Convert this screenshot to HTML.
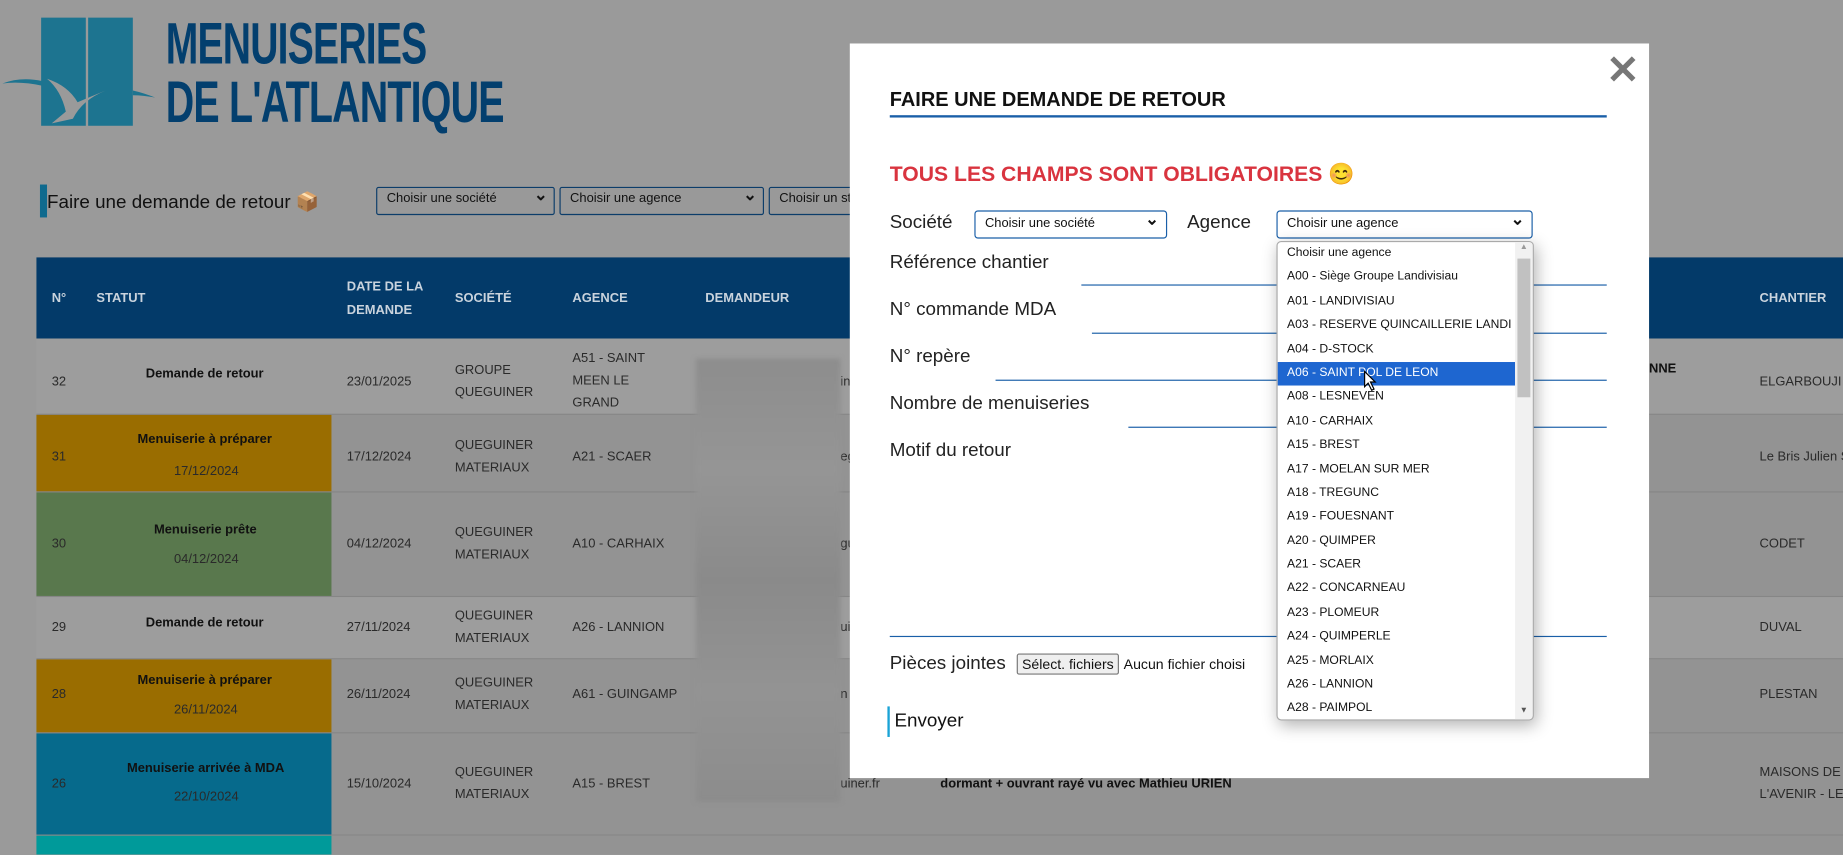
<!DOCTYPE html>
<html><head><meta charset="utf-8"><style>
*{margin:0;padding:0;box-sizing:border-box}
html,body{width:1843px;height:854px;overflow:hidden;background:#9a9a9a}
#s{position:absolute;left:0;top:0;width:1568px;height:727px;transform:scale(1.17538);transform-origin:0 0;font-family:"Liberation Sans",Arial,sans-serif;background:#9a9a9a;overflow:hidden}
.a{position:absolute;white-space:nowrap}
.sel{position:absolute;border:1px solid #0c3d6a;border-radius:2px;font-size:11px;padding:3px 8px;color:#111;background:#999}
.sel:after{content:"⌄";position:absolute;right:5px;top:-3px;font-size:14px;font-weight:bold}
.th{position:absolute;color:#c9d3dd;font-weight:bold;font-size:11px;line-height:20px}
.row{position:absolute;left:31px;width:1537px;border-bottom:1px solid #868686}
.st{position:absolute;left:0;width:251px;height:100%}
.c{position:absolute;font-size:11px;color:#2a2a2a;line-height:19px;white-space:nowrap}
.b{font-weight:bold;color:#111}
.m{position:absolute;left:723px;top:37px;width:680px;height:625px;background:#fff}
.lab{position:absolute;font-size:16px;color:#222;left:34px}
.ln{position:absolute;height:1px;background:#1a5fa8;right:36px}
.msel{position:absolute;border:1px solid #1a5fa8;border-radius:3px;font-size:11px;padding:4px 8px;color:#111;height:24px}
.msel:after{content:"⌄";position:absolute;right:6px;top:-2px;font-size:14px;font-weight:bold}
.dd{position:absolute;left:1086px;top:205px;width:219px;height:408px;background:#fff;border:1px solid #aaa;border-radius:4px;box-shadow:2px 4px 14px rgba(0,0,0,.3);overflow:hidden}
.dd div.o{height:20.4px;line-height:20.4px;font-size:10.3px;padding-left:8px;color:#111;width:202px;white-space:nowrap;overflow:hidden}
</style></head><body><div id="s">
<!-- logo -->
<div class="a" style="left:35px;top:15px;width:38px;height:92px;background:#1d7490"></div>
<div class="a" style="left:75px;top:15px;width:38px;height:92px;background:#1d7490"></div>
<svg class="a" style="left:0;top:55px" width="135" height="55"><path d="M40 12 Q52 22 56 40 L44 50 L62 46 Q70 30 90 22 Q80 26 66 32 Q58 18 40 12Z" fill="#9a9a9a"/><path d="M2 16 Q18 10 36 14 L36 18 Q18 14 2 16Z" fill="#1d7490"/><path d="M113 22 Q122 24 132 28 Q122 26 113 26Z" fill="#1d7490"/></svg>
<div class="a" style="left:141px;top:12px;font-size:50px;font-weight:bold;color:#033f6e;transform:scaleX(.665);transform-origin:0 0;letter-spacing:-1px;line-height:50px">MENUISERIES</div>
<div class="a" style="left:141px;top:62px;font-size:50px;font-weight:bold;color:#033f6e;transform:scaleX(.67);transform-origin:0 0;letter-spacing:-1px;line-height:50px">DE L'ATLANTIQUE</div>
<!-- toolbar -->
<div class="a" style="left:34px;top:157px;width:6px;height:28px;background:#0f6a8e"></div>
<div class="a" style="left:40px;top:162px;font-size:16px;color:#111">Faire une demande de retour 📦</div>
<div class="sel" style="left:320px;top:159px;width:152px;height:24px">Choisir une société</div>
<div class="sel" style="left:476px;top:159px;width:174px;height:24px">Choisir une agence</div>
<div class="sel" style="left:654px;top:159px;width:100px;height:24px">Choisir un statut</div>
<!-- table header -->
<div class="a" style="left:31px;top:219px;width:1537px;height:69px;background:#033a69"></div>
<div class="th" style="left:44px;top:244px">N°</div>
<div class="th" style="left:82px;top:244px">STATUT</div>
<div class="th" style="left:295px;top:234px">DATE DE LA<br>DEMANDE</div>
<div class="th" style="left:387px;top:244px">SOCIÉTÉ</div>
<div class="th" style="left:487px;top:244px">AGENCE</div>
<div class="th" style="left:600px;top:244px">DEMANDEUR</div>
<div class="th" style="left:1497px;top:244px">CHANTIER</div>
<!-- rows -->
<div class="row" style="top:288px;height:65px;background:#9d9d9d"></div>
<div class="c" style="left:44px;top:316px">32</div><div class="c b" style="left:124px;top:309px">Demande de retour</div>
<div class="c" style="left:295px;top:316px">23/01/2025</div><div class="c" style="left:387px;top:306px">GROUPE<br>QUEGUINER</div><div class="c" style="left:487px;top:296px">A51 - SAINT<br>MEEN LE<br>GRAND</div>
<div class="c" style="left:715px;top:316px">in</div>
<div class="c b" style="left:1395px;top:305px">ANNE</div><div class="c" style="left:1497px;top:316px">ELGARBOUJI</div>

<div class="row" style="top:353px;height:66px;background:#939393"><div class="st" style="background:#9a6d00"></div></div>
<div class="c" style="left:44px;top:380px">31</div><div class="c b" style="left:117px;top:365px">Menuiserie à préparer</div><div class="c" style="left:148px;top:392px">17/12/2024</div>
<div class="c" style="left:295px;top:380px">17/12/2024</div><div class="c" style="left:387px;top:370px">QUEGUINER<br>MATERIAUX</div><div class="c" style="left:487px;top:380px">A21 - SCAER</div><div class="c" style="left:715px;top:380px">eg</div><div class="c" style="left:1497px;top:380px">Le Bris Julien S</div>

<div class="row" style="top:419px;height:89px;background:#939393"><div class="st" style="background:#59784d"></div></div>
<div class="c" style="left:44px;top:454px">30</div><div class="c b" style="left:131px;top:442px">Menuiserie prête</div><div class="c" style="left:148px;top:467px">04/12/2024</div>
<div class="c" style="left:295px;top:454px">04/12/2024</div><div class="c" style="left:387px;top:444px">QUEGUINER<br>MATERIAUX</div><div class="c" style="left:487px;top:454px">A10 - CARHAIX</div><div class="c" style="left:715px;top:454px">gu</div><div class="c" style="left:1497px;top:454px">CODET</div>

<div class="row" style="top:508px;height:53px;background:#9d9d9d"></div>
<div class="c" style="left:44px;top:525px">29</div><div class="c b" style="left:124px;top:521px">Demande de retour</div>
<div class="c" style="left:295px;top:525px">27/11/2024</div><div class="c" style="left:387px;top:515px">QUEGUINER<br>MATERIAUX</div><div class="c" style="left:487px;top:525px">A26 - LANNION</div><div class="c" style="left:715px;top:525px">ui</div><div class="c" style="left:1497px;top:525px">DUVAL</div>

<div class="row" style="top:561px;height:63px;background:#939393"><div class="st" style="background:#9a6d00"></div></div>
<div class="c" style="left:44px;top:582px">28</div><div class="c b" style="left:117px;top:570px">Menuiserie à préparer</div><div class="c" style="left:148px;top:595px">26/11/2024</div>
<div class="c" style="left:295px;top:582px">26/11/2024</div><div class="c" style="left:387px;top:572px">QUEGUINER<br>MATERIAUX</div><div class="c" style="left:487px;top:582px">A61 - GUINGAMP</div><div class="c" style="left:715px;top:582px">n</div><div class="c" style="left:1497px;top:582px">PLESTAN</div>

<div class="row" style="top:624px;height:87px;background:#939393"><div class="st" style="background:#066a8c"></div></div>
<div class="c" style="left:44px;top:658px">26</div><div class="c b" style="left:108px;top:645px">Menuiserie arrivée à MDA</div><div class="c" style="left:148px;top:669px">22/10/2024</div>
<div class="c" style="left:295px;top:658px">15/10/2024</div><div class="c" style="left:387px;top:648px">QUEGUINER<br>MATERIAUX</div><div class="c" style="left:487px;top:658px">A15 - BREST</div><div class="c" style="left:715px;top:658px">uiner.fr</div>
<div class="c b" style="left:800px;top:658px">dormant + ouvrant rayé vu avec Mathieu URIEN</div><div class="c" style="left:1497px;top:648px">MAISONS DE<br>L'AVENIR - LE</div>

<div class="row" style="top:711px;height:30px;background:#939393"><div class="st" style="background:#009a9a"></div></div>
<div class="a" style="left:592px;top:305px;width:123px;height:377px;background:linear-gradient(#8d8d8d,#959595,#8a8a8a,#939393,#8c8c8c);filter:blur(2px)"></div>

<!-- modal -->
<div class="m">
<div class="a" style="right:8px;top:3px;font-size:34px;color:#777;font-weight:bold">✕</div>
<div class="a" style="left:34px;top:38px;font-size:17px;font-weight:bold;color:#111">FAIRE UNE DEMANDE DE RETOUR</div>
<div class="a" style="left:34px;top:61px;width:610px;height:2px;background:#1a5fa8"></div>
<div class="a" style="left:34px;top:101px;font-size:18px;font-weight:bold;color:#d9343f">TOUS LES CHAMPS SONT OBLIGATOIRES 😊</div>
<div class="lab" style="top:144px">Société</div>
<div class="msel" style="left:106px;top:142px;width:164px">Choisir une société</div>
<div class="lab" style="left:287px;top:144px">Agence</div>
<div class="msel" style="left:363px;top:142px;width:218px">Choisir une agence</div>
<div class="lab" style="top:178px">Référence chantier</div><div class="ln" style="left:197px;top:205px"></div>
<div class="lab" style="top:218px">N° commande MDA</div><div class="ln" style="left:206px;top:246px"></div>
<div class="lab" style="top:258px">N° repère</div><div class="ln" style="left:124px;top:286px"></div>
<div class="lab" style="top:298px">Nombre de menuiseries</div><div class="ln" style="left:237px;top:326px"></div>
<div class="lab" style="top:338px">Motif du retour</div><div class="ln" style="left:34px;top:504px"></div>
<div class="lab" style="top:519px">Pièces jointes</div>
<div class="a" style="left:142px;top:519px;width:87px;height:18px;border:1px solid #777;border-radius:2px;background:#efefef;font-size:12px;line-height:16px;text-align:center;color:#111">Sélect. fichiers</div>
<div class="a" style="left:233px;top:521px;font-size:12px;color:#111">Aucun fichier choisi</div>
<div class="a" style="left:32px;top:564px;width:2px;height:26px;background:#1aa3d6"></div>
<div class="a" style="left:38px;top:568px;font-size:16px;color:#111">Envoyer</div>
</div>
<!-- dropdown -->
<div class="dd">
<div class="o">Choisir une agence</div><div class="o">A00 - Siège Groupe Landivisiau</div><div class="o">A01 - LANDIVISIAU</div><div class="o">A03 - RESERVE QUINCAILLERIE LANDI</div><div class="o">A04 - D-STOCK</div><div class="o" style="background:#1e66d0;color:#fff">A06 - SAINT POL DE LEON</div><div class="o">A08 - LESNEVEN</div><div class="o">A10 - CARHAIX</div><div class="o">A15 - BREST</div><div class="o">A17 - MOELAN SUR MER</div><div class="o">A18 - TREGUNC</div><div class="o">A19 - FOUESNANT</div><div class="o">A20 - QUIMPER</div><div class="o">A21 - SCAER</div><div class="o">A22 - CONCARNEAU</div><div class="o">A23 - PLOMEUR</div><div class="o">A24 - QUIMPERLE</div><div class="o">A25 - MORLAIX</div><div class="o">A26 - LANNION</div><div class="o">A28 - PAIMPOL</div>
<div class="a" style="left:202px;top:0;width:15px;height:406px;background:#f1f1f1"></div>
<div class="a" style="left:204px;top:14px;width:11px;height:118px;background:#c1c1c1"></div>
<div class="a" style="left:206px;top:1px;font-size:7px;color:#999">▲</div>
<div class="a" style="left:206px;top:395px;font-size:7px;color:#555">▼</div>
</div>
<svg class="a" style="left:1160px;top:315px" width="12" height="18"><path d="M1 1 L1 14 L4 11 L7 17 L9 16 L6 10 L10 10 Z" fill="#fff" stroke="#000" stroke-width="1"/></svg>
</div></body></html>
